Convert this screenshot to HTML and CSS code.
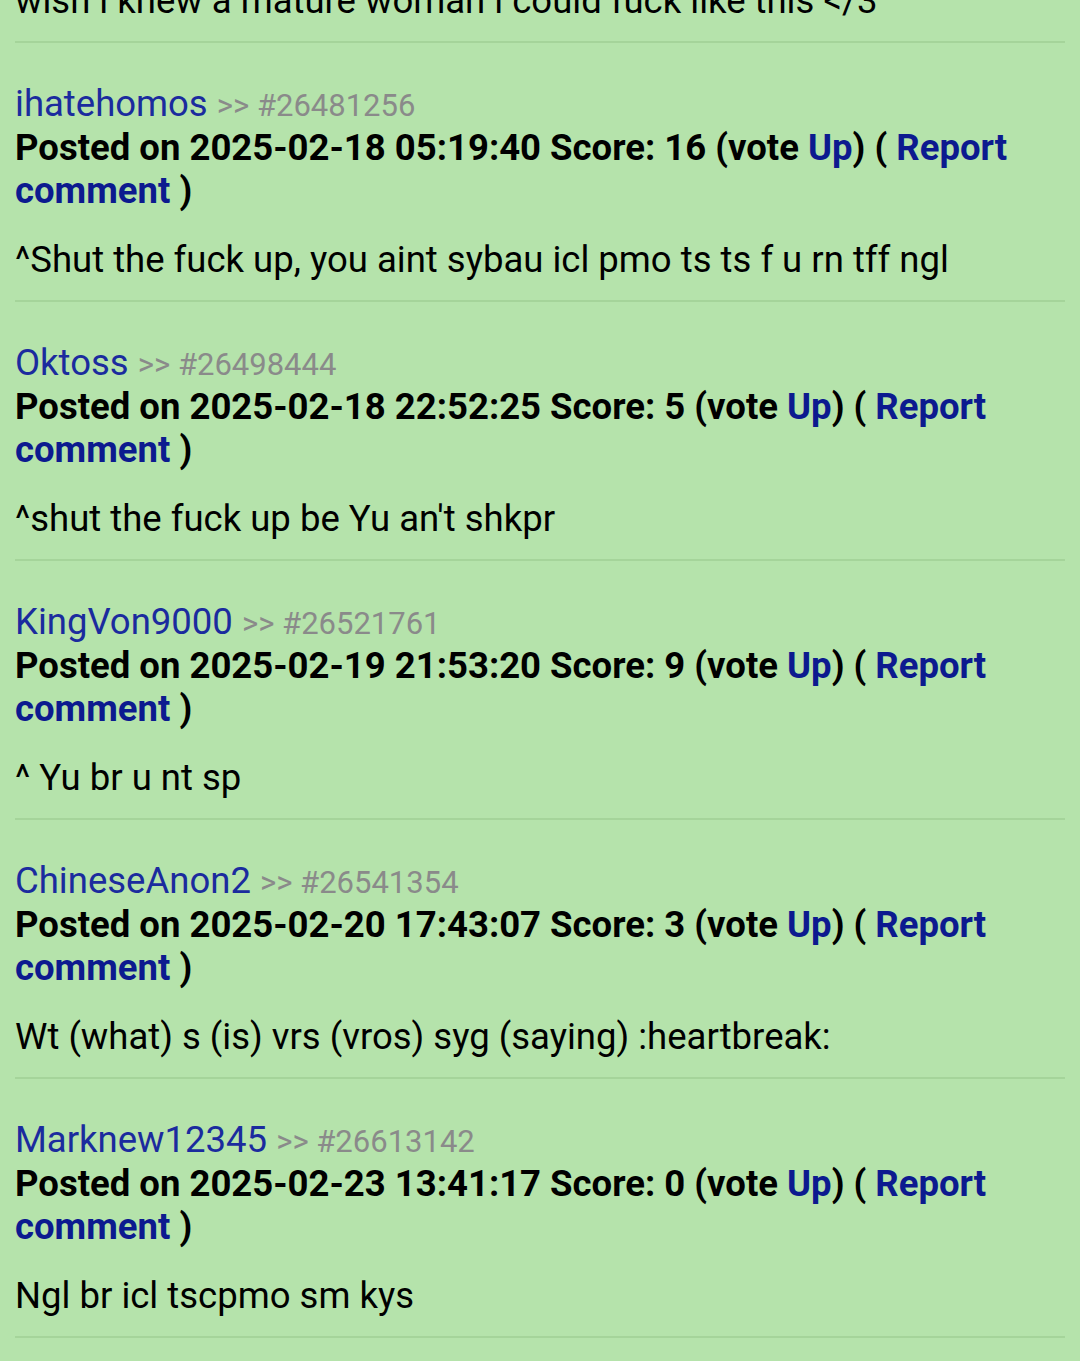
FILE: index.html
```html
<!DOCTYPE html>
<html>
<head>
<meta charset="utf-8">
<link rel="stylesheet" href="styles.css">
</head>
<body>
<div class="thread">
  <p class="body">wish i knew a mature woman i could fuck like this &lt;/3</p>

  <div class="comment">
    <div class="head"><a class="user" href="#">ihatehomos</a> <span class="id">&gt;&gt; #26481256</span></div>
    <div class="meta">Posted on 2025-02-18 05:19:40 Score: 16 (vote <a href="#">Up</a>) ( <a href="#">Report comment</a> )</div>
    <p class="body">^Shut the fuck up, you aint sybau icl pmo ts ts f u rn tff ngl</p>
  </div>

  <div class="comment">
    <div class="head"><a class="user" href="#">Oktoss</a> <span class="id">&gt;&gt; #26498444</span></div>
    <div class="meta">Posted on 2025-02-18 22:52:25 Score: 5 (vote <a href="#">Up</a>) ( <a href="#">Report comment</a> )</div>
    <p class="body">^shut the fuck up be Yu an't shkpr</p>
  </div>

  <div class="comment">
    <div class="head"><a class="user" href="#">KingVon9000</a> <span class="id">&gt;&gt; #26521761</span></div>
    <div class="meta">Posted on 2025-02-19 21:53:20 Score: 9 (vote <a href="#">Up</a>) ( <a href="#">Report comment</a> )</div>
    <p class="body">^ Yu br u nt sp</p>
  </div>

  <div class="comment">
    <div class="head"><a class="user" href="#">ChineseAnon2</a> <span class="id">&gt;&gt; #26541354</span></div>
    <div class="meta">Posted on 2025-02-20 17:43:07 Score: 3 (vote <a href="#">Up</a>) ( <a href="#">Report comment</a> )</div>
    <p class="body">Wt (what) s (is) vrs (vros) syg (saying) :heartbreak:</p>
  </div>

  <div class="comment">
    <div class="head"><a class="user" href="#">Marknew12345</a> <span class="id">&gt;&gt; #26613142</span></div>
    <div class="meta">Posted on 2025-02-23 13:41:17 Score: 0 (vote <a href="#">Up</a>) ( <a href="#">Report comment</a> )</div>
    <p class="body">Ngl br icl tscpmo sm kys</p>
  </div>
  <div class="rule"></div>
</div>
</body>
</html>
```

FILE: styles.css
```css
html, body {
  margin: 0;
  padding: 0;
  background: #b5e3ab;
  overflow: hidden;
}
body {
  font-family: Roboto, "Liberation Sans", sans-serif;
  font-size: 36.5px;
  color: #000;
}
.thread {
  margin-top: -21px;
  padding: 0 15px;
}
.body {
  margin: 0;
  line-height: 44px;
}
.comment {
  border-top: 2px solid #a5d49a;
  margin-top: 18px;
}
.head {
  margin-top: 39px;
  line-height: 44px;
}
.user {
  color: #1b2b9e;
  text-decoration: none;
}
.id {
  color: #8a8a8a;
  font-size: 31px;
  line-height: 1;
}
.meta {
  font-weight: bold;
  line-height: 43px;
}
.meta a {
  color: #0c1a8f;
  text-decoration: none;
}
.comment .body {
  margin-top: 26px;
}
.rule {
  border-top: 2px solid #a5d49a;
  margin-top: 18px;
}
```
